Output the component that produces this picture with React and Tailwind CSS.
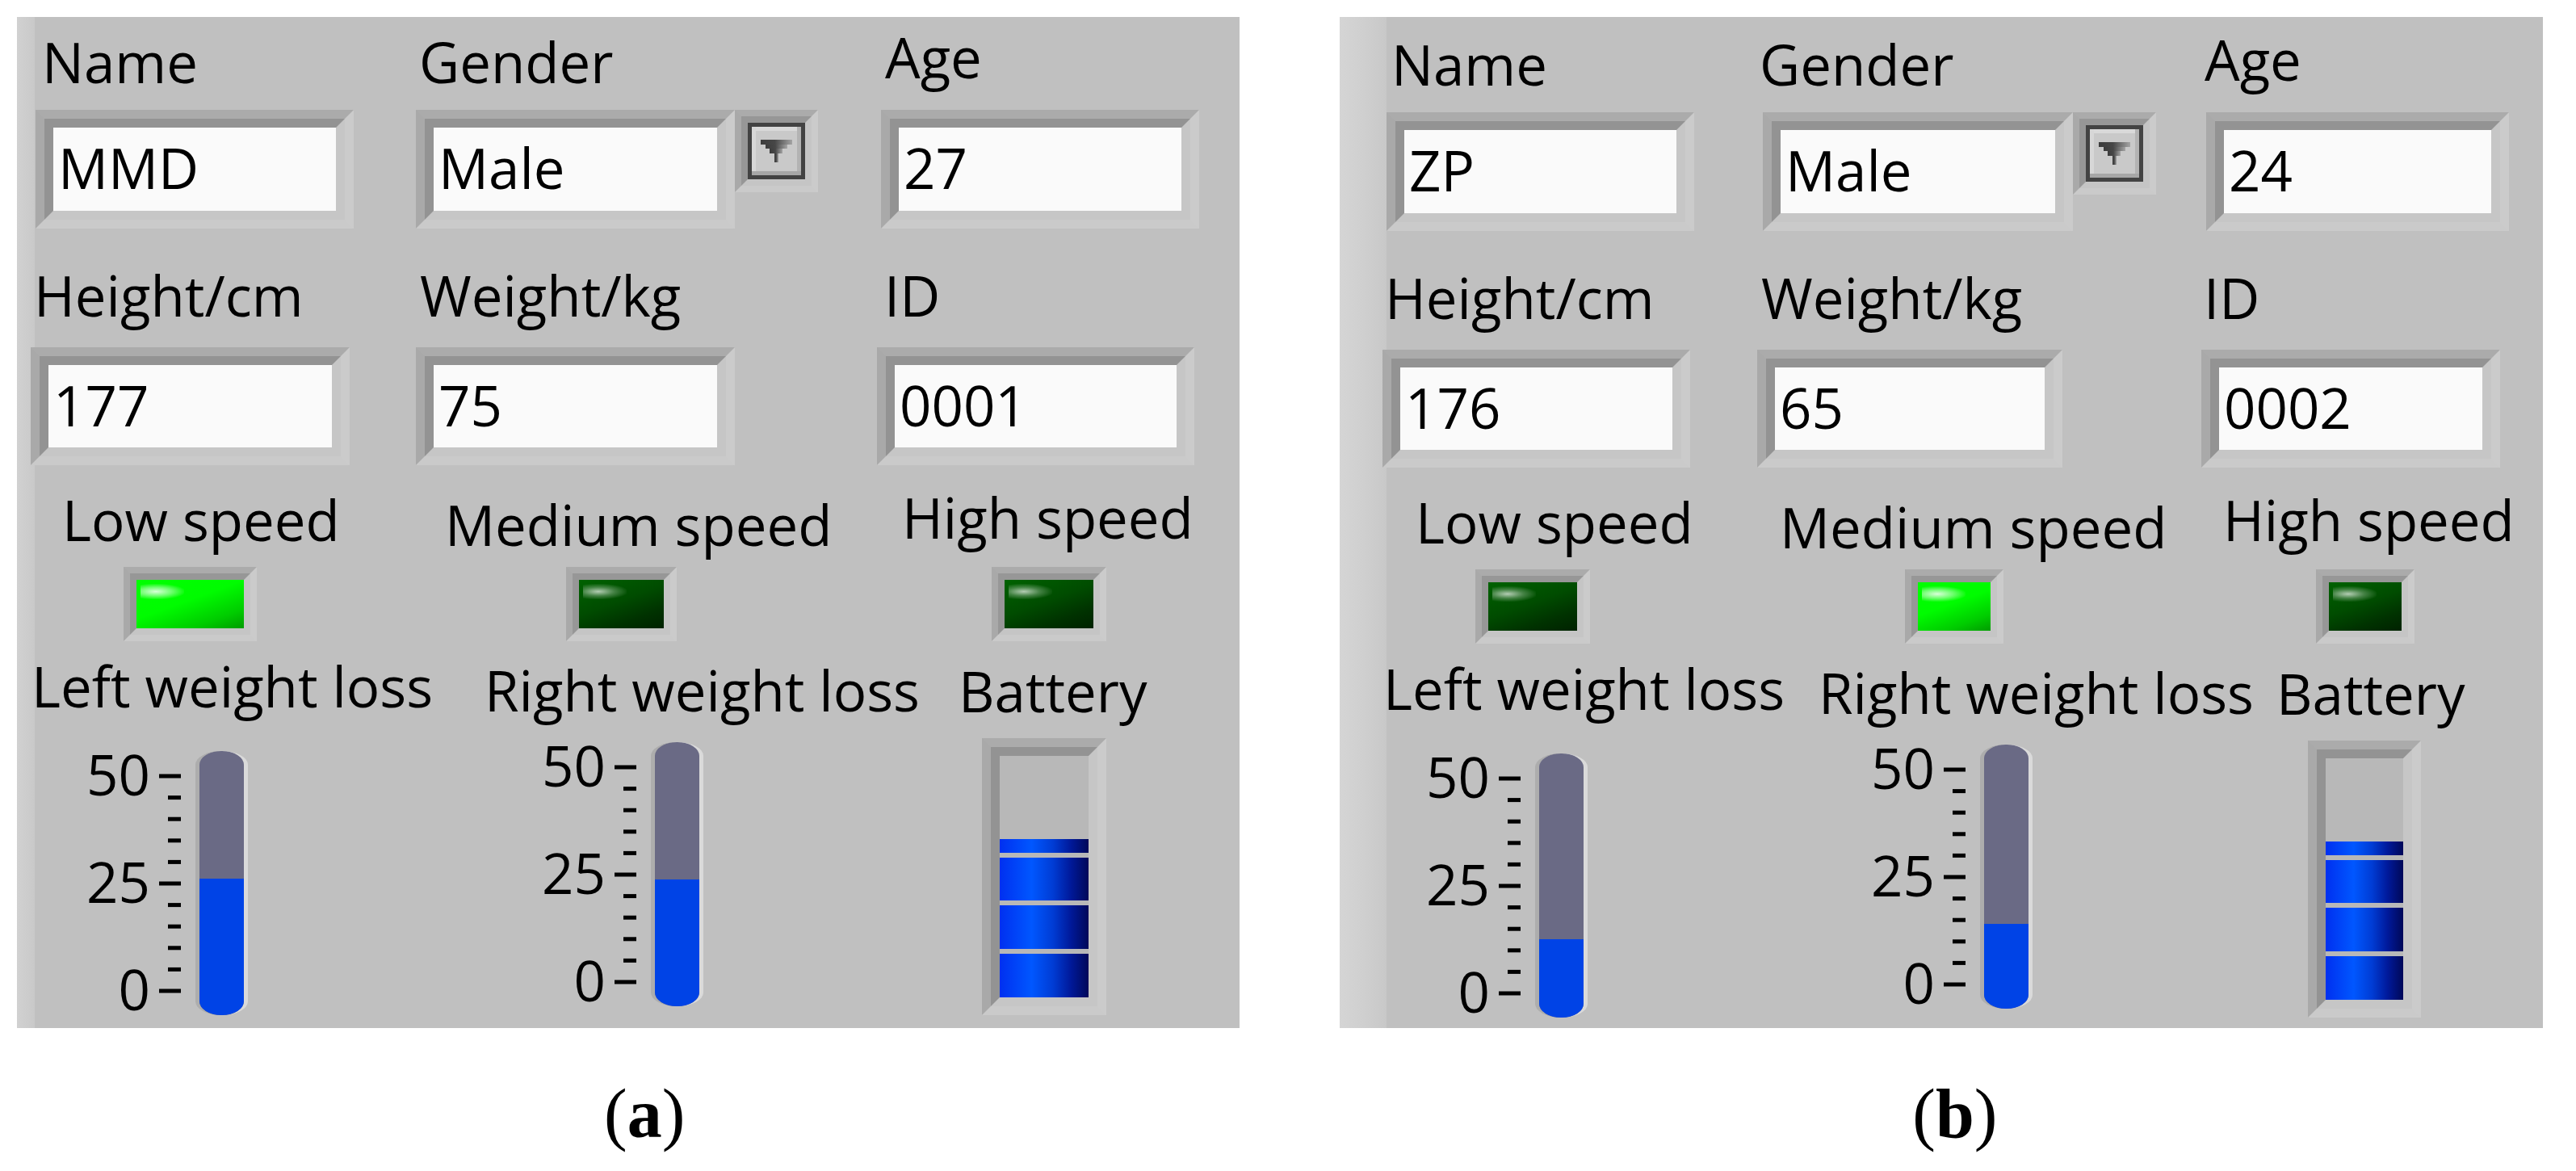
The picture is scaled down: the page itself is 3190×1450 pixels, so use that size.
import React from "react";

const TICKS = Array.from({ length: 11 }, (_, k) => k);

function Frame22({ className = "", children }) {
  return (
    <div className={"shrink-0 border-[11px] border-t-[#ababab] border-l-[#a9a9a9] border-r-[#cbcbcb] border-b-[#cacaca] " + className}>
      <div className="w-full h-full border-[11px] border-t-[#939393] border-l-[#939393] border-r-[#c6c6c6] border-b-[#c6c6c6]">
        {children}
      </div>
    </div>
  );
}

function Frame16({ className = "", children }) {
  return (
    <div className={"shrink-0 border-[8px] border-t-[#ababab] border-l-[#a9a9a9] border-r-[#cbcbcb] border-b-[#cacaca] " + className}>
      <div className="w-full h-full border-[8px] border-t-[#979797] border-l-[#979797] border-r-[#c5c5c5] border-b-[#c5c5c5]">
        {children}
      </div>
    </div>
  );
}

function TextBox({ className, value }) {
  return (
    <Frame22 className={className}>
      <div className="w-full h-full bg-[#fafafa] flex items-center pl-[6px] pb-[4px] whitespace-nowrap">{value}</div>
    </Frame22>
  );
}

function Dropdown() {
  return (
    <Frame16 className="w-[103px] h-[102px]">
      <div className="w-full h-full border-[5px] border-[#434343]">
        <svg className="block" width="61" height="60" viewBox="0 0 61 60">
          <defs>
            <linearGradient id="trig" x1="0" y1="0" x2="1" y2="0">
              <stop offset="0" stopColor="#3c3c3c" />
              <stop offset="0.45" stopColor="#474747" />
              <stop offset="0.75" stopColor="#7a7a7a" />
              <stop offset="1" stopColor="#a4a4a4" />
            </linearGradient>
          </defs>
          <rect x="0" y="0" width="61" height="60" fill="#c9c9c9" />
          <rect x="0" y="0" width="61" height="5" fill="#d9d9d9" />
          <rect x="0" y="0" width="5" height="60" fill="#d7d7d7" />
          <rect x="0" y="55" width="61" height="5" fill="#a7a7a7" />
          <rect x="56" y="0" width="5" height="55" fill="#b3b3b3" />
          <g fill="url(#trig)">
            <rect x="11" y="16" width="39" height="6" />
            <rect x="17" y="22" width="27" height="5" />
            <rect x="22" y="27" width="16" height="6" />
            <rect x="28" y="33" width="5" height="11" />
          </g>
        </svg>
      </div>
    </Frame16>
  );
}

function Led({ on, className }) {
  return (
    <Frame16 className={className}>
      <div
        className={
          "relative w-full h-full " +
          (on
            ? "bg-[linear-gradient(160deg,#00ff00_0%,#00fc00_45%,#00cc00_78%,#009c00_100%)]"
            : "bg-[linear-gradient(160deg,#006200_0%,#004c00_45%,#003200_75%,#002200_100%)]")
        }
      >
        <div
          className={
            "absolute left-[5px] top-[5px] w-[54px] h-[19px] " +
            (on
              ? "bg-[radial-gradient(ellipse_at_35%_50%,rgba(240,255,240,0.9)_0%,rgba(200,255,200,0.55)_40%,rgba(0,255,0,0)_75%)]"
              : "bg-[radial-gradient(ellipse_at_35%_50%,rgba(210,225,210,0.85)_0%,rgba(150,185,150,0.45)_40%,rgba(0,80,0,0)_75%)]")
          }
        />
      </div>
    </Frame16>
  );
}

function Thermo({ fill, className }) {
  return (
    <div className={"flex items-start shrink-0 " + className}>
      <div className="w-[80px] h-[327px] shrink-0 flex flex-col items-end">
        <div className="-mt-[6px]">50</div>
        <div className="mt-[64px]">25</div>
        <div className="mt-[64px]">0</div>
      </div>
      <svg className="ml-[11px] shrink-0 block" width="27" height="327" viewBox="0 0 27 327">
        {TICKS.map((k) => {
          const y = 31 + k * 26.6 - 2.5;
          const major = k % 5 === 0;
          return <rect key={k} x={major ? 0 : 11} y={y} width={major ? 27 : 16} height="5" fill="#000" />;
        })}
      </svg>
      <div className="ml-[18px] w-[65px] h-[327px] shrink-0 rounded-[32px/17px] overflow-hidden border-x-[5px] border-l-[#adadad] border-r-[#dadada] bg-[#6a6a85] flex flex-col justify-end">
        <div className="w-full bg-[#0043e6]" style={{ height: fill }} />
      </div>
    </div>
  );
}

const BAR = "shrink-0 bg-[linear-gradient(to_right,#0030f0_0%,#0057ff_36%,#003cd4_60%,#00199a_80%,#000858_100%)]";

function Battery({ className }) {
  return (
    <Frame22 className={className}>
      <div className="w-full h-full bg-[#b8b8b8] flex flex-col justify-end gap-[6px]">
        <div className={"h-[17px] " + BAR} />
        <div className={"h-[53px] " + BAR} />
        <div className={"h-[54px] " + BAR} />
        <div className={"h-[54px] " + BAR} />
      </div>
    </Frame22>
  );
}

const L = "shrink-0 whitespace-nowrap";

function PanelA() {
  return (
    <div className="shrink-0 ml-[21px] w-[1514px] h-[1252px] flex flex-col bg-[linear-gradient(to_right,#d1d1d1_0px,#c9c9c9_22px,#c0c0c0_22px)]">
      <div className="flex items-start mt-[15px]">
        <div className={"ml-[31px] mt-[6px] w-[440px] " + L}>Name</div>
        <div className={"ml-[27px] mt-[6px] w-[560px] " + L}>Gender</div>
        <div className={"ml-[17px] " + L}>Age</div>
      </div>
      <div className="flex items-start mt-[25px]">
        <TextBox className="ml-[23px] w-[394px] h-[147px]" value="MMD" />
        <TextBox className="ml-[77px] w-[395px] h-[147px]" value="Male" />
        <Dropdown />
        <TextBox className="ml-[78px] w-[394px] h-[147px]" value="27" />
      </div>
      <div className="flex items-start mt-[48px]">
        <div className={"ml-[21px] w-[440px] " + L}>Height/cm</div>
        <div className={"ml-[38px] w-[560px] " + L}>Weight/kg</div>
        <div className={"ml-[15px] " + L}>ID</div>
      </div>
      <div className="flex items-start mt-[30px]">
        <TextBox className="ml-[17px] w-[395px] h-[146px]" value="177" />
        <TextBox className="ml-[82px] w-[395px] h-[146px]" value="75" />
        <TextBox className="ml-[176px] w-[393px] h-[146px]" value="0001" />
      </div>
      <div className="flex items-start mt-[30px]">
        <div className={"ml-[56px] mt-[3px] w-[430px] " + L}>Low speed</div>
        <div className={"ml-[44px] mt-[9px] w-[540px] " + L}>Medium speed</div>
        <div className={"ml-[26px] " + L}>High speed</div>
      </div>
      <div className="flex items-start mt-[18px]">
        <Led on className="ml-[132px] w-[165px] h-[92px]" />
        <Led className="ml-[383px] w-[137px] h-[92px]" />
        <Led className="ml-[390px] w-[142px] h-[92px]" />
      </div>
      <div className="flex items-start mt-[21px]">
        <div className={"ml-[18px] w-[500px] " + L}>Left weight loss</div>
        <div className={"ml-[61px] mt-[5px] w-[560px] " + L}>Right weight loss</div>
        <div className={"ml-[27px] mt-[6px] " + L}>Battery</div>
      </div>
      <div className="flex items-start mt-[24px]">
        <Thermo fill={169} className="ml-[85px] mt-[16px]" />
        <Thermo fill={157} className="ml-[363px] mt-[5px]" />
        <Battery className="ml-[345px] w-[154px] h-[343px]" />
      </div>
    </div>
  );
}

function PanelB() {
  return (
    <div className="shrink-0 ml-[124px] w-[1490px] h-[1252px] flex flex-col pt-[3px] bg-[linear-gradient(to_right,#d5d5d5_0px,#cfcfcf_30px,#c8c8c8_58px,#c0c0c0_58px)]">
      <div className="flex items-start mt-[15px]">
        <div className={"ml-[64px] mt-[6px] w-[440px] " + L}>Name</div>
        <div className={"ml-[16px] mt-[6px] w-[540px] " + L}>Gender</div>
        <div className={"ml-[11px] " + L}>Age</div>
      </div>
      <div className="flex items-start mt-[25px]">
        <TextBox className="ml-[58px] w-[381px] h-[147px]" value="ZP" />
        <TextBox className="ml-[85px] w-[384px] h-[147px]" value="Male" />
        <Dropdown />
        <TextBox className="ml-[62px] w-[375px] h-[147px]" value="24" />
      </div>
      <div className="flex items-start mt-[48px]">
        <div className={"ml-[56px] w-[440px] " + L}>Height/cm</div>
        <div className={"ml-[26px] w-[540px] " + L}>Weight/kg</div>
        <div className={"ml-[8px] " + L}>ID</div>
      </div>
      <div className="flex items-start mt-[30px]">
        <TextBox className="ml-[53px] w-[381px] h-[146px]" value="176" />
        <TextBox className="ml-[83px] w-[378px] h-[146px]" value="65" />
        <TextBox className="ml-[172px] w-[370px] h-[146px]" value="0002" />
      </div>
      <div className="flex items-start mt-[30px]">
        <div className={"ml-[94px] mt-[3px] w-[430px] " + L}>Low speed</div>
        <div className={"ml-[21px] mt-[9px] w-[540px] " + L}>Medium speed</div>
        <div className={"ml-[9px] " + L}>High speed</div>
      </div>
      <div className="flex items-start mt-[18px]">
        <Led className="ml-[168px] w-[142px] h-[92px]" />
        <Led on className="ml-[390px] w-[122px] h-[92px]" />
        <Led className="ml-[387px] w-[122px] h-[92px]" />
      </div>
      <div className="flex items-start mt-[21px]">
        <div className={"ml-[54px] w-[500px] " + L}>Left weight loss</div>
        <div className={"ml-[39px] mt-[5px] w-[560px] " + L}>Right weight loss</div>
        <div className={"ml-[7px] mt-[6px] " + L}>Battery</div>
      </div>
      <div className="flex items-start mt-[24px]">
        <Thermo fill={97} className="ml-[106px] mt-[16px]" />
        <Thermo fill={105} className="ml-[350px] mt-[5px]" />
        <Battery className="ml-[341px] w-[140px] h-[343px]" />
      </div>
    </div>
  );
}

export default function App() {
  return (
    <div className="w-[3190px] h-[1450px] bg-white overflow-hidden font-['Open_Sans',sans-serif] text-[69px] leading-none text-black">
      <div className="flex pt-[21px]">
        <PanelA />
        <PanelB />
      </div>
      <div className="flex mt-[63px] font-['Liberation_Serif',serif] text-[86px] leading-none">
        <div className="ml-[748px] whitespace-nowrap">(<b>a</b>)</div>
        <div className="ml-[1520px] whitespace-nowrap">(<b>b</b>)</div>
      </div>
    </div>
  );
}
